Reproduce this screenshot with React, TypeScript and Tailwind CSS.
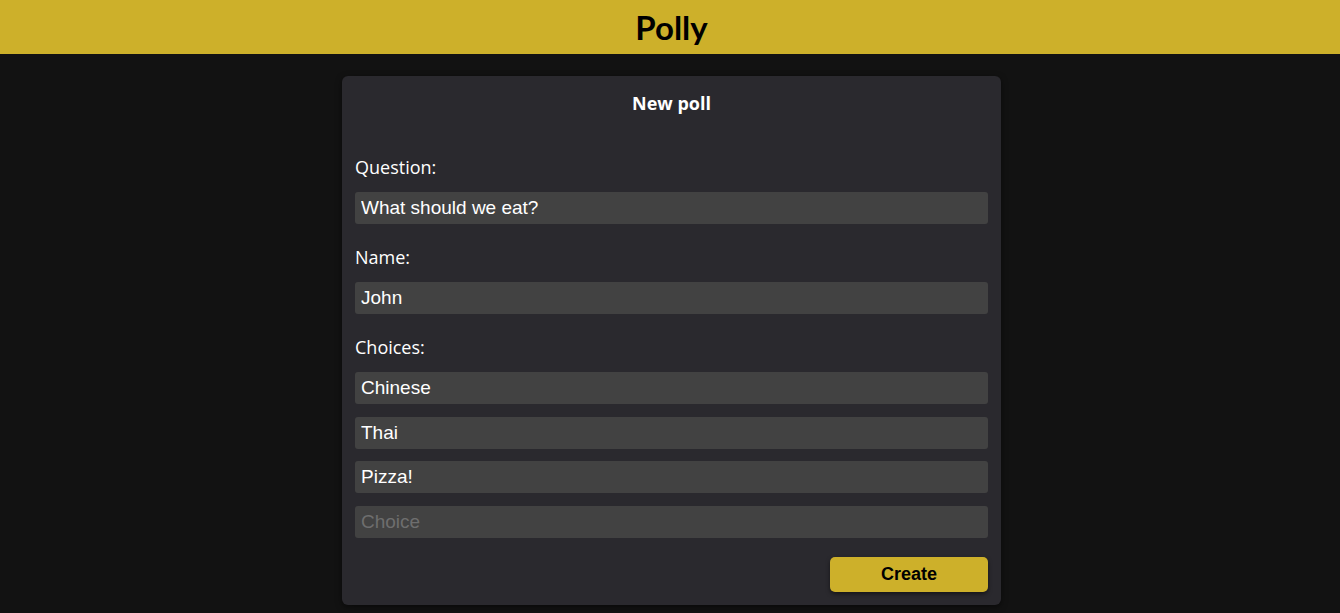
import React from "react";

const choices = ["Chinese", "Thai", "Pizza!"];

function Field({ value, placeholder }: { value?: string; placeholder?: string }) {
  return (
    <input
      readOnly
      value={value}
      placeholder={placeholder}
      className="w-full h-8 px-[6px] rounded-[3px] bg-[#424242] text-white text-[19px] font-['Liberation_Sans',Arial,sans-serif] outline-none placeholder:text-[#6e6e6e]"
    />
  );
}

export default function App() {
  return (
    <div className="min-h-screen bg-[#121212] font-['Open_Sans','Noto_Sans',sans-serif]">
      <header className="h-[54px] bg-[#cdb02a] flex items-center justify-center pl-[3px]">
        <h1 className="text-[33px] font-bold text-black font-['Lato',sans-serif] leading-none">Polly</h1>
      </header>
      <div className="flex justify-center pt-[22px] pl-[3px]">
        <div className="w-[659px] bg-[#2a292e] rounded-md px-[13px] pt-[16px] pb-[13px] shadow-[0_2px_6px_rgba(0,0,0,0.5)]">
          <h2 className="text-center text-white font-bold text-[18px] leading-[22px]">
            New poll
          </h2>
          <label className="block mt-[41px] mb-[13px] text-white text-[18px] leading-[24px]">Question:</label>
          <Field value="What should we eat?" />
          <label className="block mt-[21px] mb-[13px] text-white text-[18px] leading-[24px]">Name:</label>
          <Field value="John" />
          <label className="block mt-[21px] mb-[13px] text-white text-[18px] leading-[24px]">Choices:</label>
          <div className="flex flex-col gap-[12.5px]">
            {choices.map((c) => (
              <Field key={c} value={c} />
            ))}
            <Field placeholder="Choice" />
          </div>
          <div className="flex justify-end mt-[19px]">
            <button className="w-[158px] h-[35px] rounded-[5px] bg-[#cdb02a] text-black font-bold text-[18px] font-['Liberation_Sans',Arial,sans-serif] shadow-[0_2px_4px_rgba(0,0,0,0.5)]">
              Create
            </button>
          </div>
        </div>
      </div>
    </div>
  );
}
